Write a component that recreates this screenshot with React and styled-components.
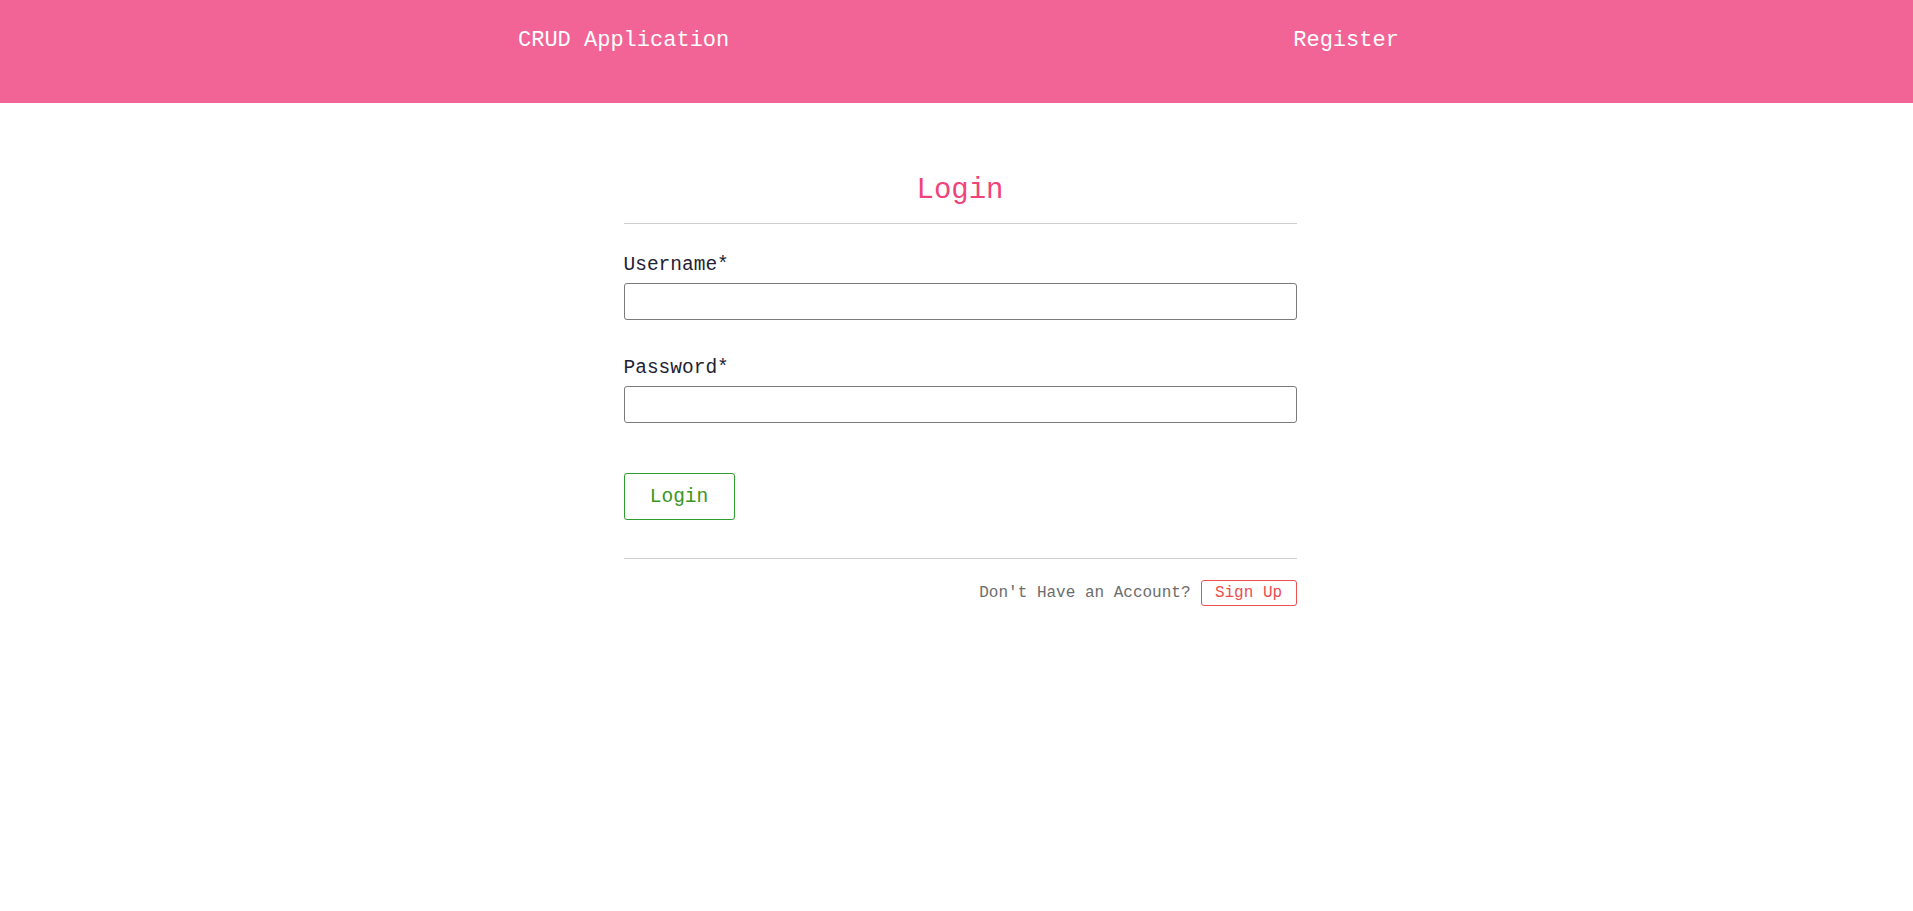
import React, { useState } from "react";
import styled, { createGlobalStyle } from "styled-components";

const GlobalStyle = createGlobalStyle`
	body {
		margin: 0;
		background: #ffffff;
		font-family: "Liberation Mono", "DejaVu Sans Mono", monospace;
	}
	* {
		box-sizing: border-box;
	}
`;

const Navbar = styled.nav`
	height: 103px;
	background-color: #f26496;
	display: flex;
	align-items: flex-start;
	padding-top: 28px;
	padding-left: 518px;
	gap: 564px;
`;

const NavLink = styled.a`
	color: #ffffff;
	font-size: 22px;
	line-height: 26px;
	text-decoration: none;
	cursor: pointer;
`;

const Card = styled.form`
	width: 673px;
	margin: 70px 0 0 calc(50% - 333px);
`;

const Title = styled.h2`
	margin: 0 0 15px;
	font-size: 29px;
	line-height: 35px;
	font-weight: normal;
	text-align: center;
	color: #f0437a;
`;

const Divider = styled.hr`
	margin: 0;
	border: none;
	border-top: 1px solid #cfcfcf;
`;

const Field = styled.div`
	display: flex;
	flex-direction: column;
	gap: 6px;
	margin-top: ${(props) => props.$top}px;
`;

const Label = styled.label`
	font-size: 19.5px;
	line-height: 24px;
	color: #1f2233;
`;

const Input = styled.input`
	height: 37px;
	width: 100%;
	border: 1px solid #7a7a7a;
	border-radius: 3px;
	padding: 0 8px;
	font-family: inherit;
	font-size: 16px;
	outline: none;
`;

const LoginButton = styled.button`
	margin-top: 50px;
	margin-bottom: 38px;
	width: 111px;
	height: 47px;
	background: #ffffff;
	border: 1px solid #2e9e2e;
	border-radius: 3px;
	color: #3a961f;
	font-family: inherit;
	font-size: 19.5px;
	cursor: pointer;
`;

const Footer = styled.div`
	display: flex;
	justify-content: flex-end;
	align-items: center;
	gap: 10px;
	margin-top: 21px;
`;

const FooterText = styled.span`
	font-size: 16px;
	color: #6c6c6c;
`;

const SignUpButton = styled.button`
	height: 26px;
	width: 96px;
	padding: 0;
	background: #ffffff;
	border: 1px solid #ee5050;
	border-radius: 3px;
	color: #ee4d4d;
	font-family: inherit;
	font-size: 16px;
	cursor: pointer;
`;

export default function App() {
	const [username, setUsername] = useState("");
	const [password, setPassword] = useState("");

	const handleSubmit = (e) => {
		e.preventDefault();
	};

	return (
		<>
			<GlobalStyle />
			<Navbar>
				<NavLink>CRUD Application</NavLink>
				<NavLink>Register</NavLink>
			</Navbar>
			<Card onSubmit={handleSubmit}>
				<Title>Login</Title>
				<Divider />
				<Field $top={29}>
					<Label htmlFor="username">Username*</Label>
					<Input
						id="username"
						value={username}
						onChange={(e) => setUsername(e.target.value)}
					/>
				</Field>
				<Field $top={36}>
					<Label htmlFor="password">Password*</Label>
					<Input
						id="password"
						type="password"
						value={password}
						onChange={(e) => setPassword(e.target.value)}
					/>
				</Field>
				<LoginButton type="submit">Login</LoginButton>
				<Divider />
				<Footer>
					<FooterText>Don't Have an Account?</FooterText>
					<SignUpButton type="button">Sign Up</SignUpButton>
				</Footer>
			</Card>
		</>
	);
}
